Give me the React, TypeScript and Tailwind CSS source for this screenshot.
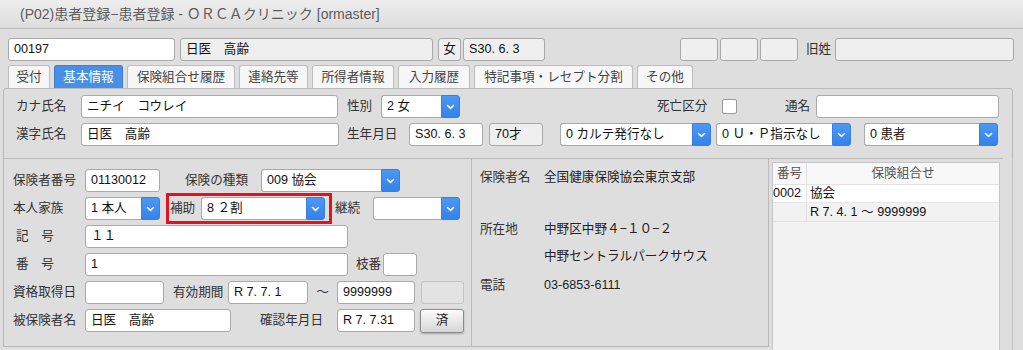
import React from "react";

const font = "font-['Liberation_Sans','Noto_Sans_CJK_JP',sans-serif]";

function Chevron() {
  return (
    <svg width="9" height="6" viewBox="0 0 9 6" fill="none">
      <path d="M1.5 1.5 L4.5 4.3 L7.5 1.5" stroke="white" strokeWidth="1.6" strokeLinecap="round" strokeLinejoin="round" />
    </svg>
  );
}

function Box({ w, ro, center, children, className = "" }: { w: string; ro?: boolean; center?: boolean; children?: React.ReactNode; className?: string }) {
  return (
    <div
      className={`h-[23px] ${w} shrink-0 border border-[#a9a9a9] rounded-[3px] ${ro ? "bg-[#efefef]" : "bg-white"} flex items-center ${center ? "justify-center" : "px-[5px]"} text-[#111] whitespace-nowrap overflow-hidden ${className}`}
    >
      {children}
    </div>
  );
}

function Select({ w, value, className = "" }: { w: string; value?: string; className?: string }) {
  return (
    <div className={`h-[23px] ${w} shrink-0 flex ${className}`}>
      <div className="flex-1 bg-white border border-r-0 border-[#a9a9a9] rounded-l-[3px] px-[5px] flex items-center text-[#111] whitespace-nowrap overflow-hidden">
        {value}
      </div>
      <div className="w-[19px] bg-gradient-to-b from-[#4b98f5] to-[#3482ea] border border-[#3a7fd8] rounded-r-[3px] flex items-center justify-center">
        <Chevron />
      </div>
    </div>
  );
}

function Label({ w, children, className = "" }: { w: string; children: React.ReactNode; className?: string }) {
  return <div className={`${w} shrink-0 text-[#333] whitespace-nowrap ${className}`}>{children}</div>;
}

const tabs = [
  { t: "受付", w: "w-[42px]" },
  { t: "基本情報", w: "w-[69px]", active: true },
  { t: "保険組合せ履歴", w: "w-[108px]" },
  { t: "連絡先等", w: "w-[69px]" },
  { t: "所得者情報", w: "w-[82px]" },
  { t: "入力履歴", w: "w-[72px]" },
  { t: "特記事項・レセプト分割", w: "w-[159px]" },
  { t: "その他", w: "w-[56px]" },
];

export default function App() {
  return (
    <div className={`w-[1023px] h-[350px] overflow-hidden bg-[#dedede] text-[12.6px] ${font}`}>
      {/* Title bar */}
      <div className="h-[29px] bg-gradient-to-b from-[#eeeeee] to-[#dddddd] border-b border-[#bdbdbd] flex items-center pl-[20px] text-[14px] text-[#5c5c5c]">
        (P02)患者登録−患者登録 - ＯＲＣＡクリニック [ormaster]
      </div>

      {/* Patient header */}
      <div className="flex items-center h-[22px] mt-[9px] pl-[8px]">
        <Box w="w-[167px] h-[22px]">00197</Box>
        <Box w="w-[253px] h-[22px]" ro className="ml-[5px]">日医　高齢</Box>
        <Box w="w-[23px] h-[22px]" ro center className="ml-[5px]">女</Box>
        <Box w="w-[82px] h-[22px]" ro className="ml-[2px]">S30. 6. 3</Box>
        <Box w="w-[38px] h-[22px]" ro className="ml-[135px]" />
        <Box w="w-[38px] h-[22px]" ro className="ml-[2px]" />
        <Box w="w-[38px] h-[22px]" ro className="ml-[2px]" />
        <Label w="w-[29px]" className="ml-[8px]">旧姓</Label>
        <Box w="w-[179px] h-[22px]" ro />
      </div>

      {/* Tabs */}
      <div className="flex gap-[4px] pl-[8px] mt-[5px] h-[23px]">
        {tabs.map((tab) => (
          <div
            key={tab.t}
            className={`${tab.w} h-[23px] rounded-t-[3px] border border-b-0 flex items-center justify-center whitespace-nowrap ${
              tab.active ? "bg-[#4a8fe7] border-[#3f7fd6] text-white" : "bg-[#f7f7f7] border-[#bdbdbd] text-[#444]"
            }`}
          >
            {tab.t}
          </div>
        ))}
      </div>

      {/* Panel 1 */}
      <div className="ml-[3px] w-[1010px] h-[70px] border border-b-0 border-[#b9b9b9] rounded-t-[3px] pt-[6px]">
        <div className="flex items-center h-[23px] pl-[12px]">
          <Label w="w-[65px]">カナ氏名</Label>
          <Box w="w-[257px]">ニチイ　コウレイ</Box>
          <Label w="w-[34px]" className="ml-[9px]">性別</Label>
          <Select w="w-[79px]" value="2 女" />
          <Label w="w-[50px]" className="ml-[197px]">死亡区分</Label>
          <div className="w-[15px] h-[15px] ml-[15px] bg-white border border-[#9a9a9a] rounded-[2px] shrink-0" />
          <Label w="w-[31px]" className="ml-[48px]">通名</Label>
          <Box w="w-[183px]" />
        </div>
        <div className="flex items-center h-[23px] pl-[12px] mt-[5px]">
          <Label w="w-[65px]">漢字氏名</Label>
          <Box w="w-[258px]">日医　高齢</Box>
          <Label w="w-[62px]" className="ml-[8px]">生年月日</Label>
          <Box w="w-[74px]">S30. 6. 3</Box>
          <Box w="w-[54px]" ro className="ml-[6px]">70才</Box>
          <Select w="w-[151px]" value="0 カルテ発行なし" className="ml-[17px]" />
          <Select w="w-[135px]" value="0 Ｕ・Ｐ指示なし" className="ml-[5px]" />
          <Select w="w-[134px]" value="0 患者" className="ml-[13px]" />
        </div>
      </div>

      {/* Panel 2 */}
      <div className="flex ml-[3px] h-[200px]">
        {/* Insurance form */}
        <div className="w-[469px] h-[189px] shrink-0 border border-[#b9b9b9] pt-[10px] pl-[9px] flex flex-col gap-[5px]">
          <div className="flex items-center h-[23px]">
            <Label w="w-[72px]">保険者番号</Label>
            <Box w="w-[75px]">01130012</Box>
            <Label w="w-[76px]" className="ml-[25px]">保険の種類</Label>
            <Select w="w-[139px]" value="009 協会" />
          </div>
          <div className="flex items-center h-[23px]">
            <Label w="w-[72px]">本人家族</Label>
            <Select w="w-[75px]" value="1 本人" />
            <div className="ml-[10px] w-[158px] h-[23px] flex items-center outline-[3px] outline-solid outline-offset-[1px] outline-[#e3121c]">
              <Label w="w-[31px]">補助</Label>
              <Select w="w-[124px]" value="8 ２割" />
            </div>
            <Label w="w-[38px]" className="ml-[7px]">継続</Label>
            <Select w="w-[87px]" />
          </div>
          <div className="flex items-center h-[23px]">
            <Label w="w-[72px]" className="pl-[3px]">記　号</Label>
            <Box w="w-[263px]">１１</Box>
          </div>
          <div className="flex items-center h-[23px]">
            <Label w="w-[72px]" className="pl-[3px]">番　号</Label>
            <Box w="w-[263px]">1</Box>
            <Label w="w-[27px]" className="ml-[8px]">枝番</Label>
            <Box w="w-[34px]" />
          </div>
          <div className="flex items-center h-[23px]">
            <Label w="w-[72px]">資格取得日</Label>
            <Box w="w-[79px]" />
            <Label w="w-[55px]" className="ml-[9px]">有効期間</Label>
            <Box w="w-[80px]">R 7. 7. 1</Box>
            <div className="w-[29px] shrink-0 text-center text-[#333]">〜</div>
            <Box w="w-[78px]">9999999</Box>
            <div className="ml-[6px] w-[43px] h-[23px] shrink-0 rounded-[3px] border border-[#c4c4c4] bg-[#e3e3e3]" />
          </div>
          <div className="flex items-center h-[23px]">
            <Label w="w-[72px]">被保険者名</Label>
            <Box w="w-[146px]">日医　高齢</Box>
            <Label w="w-[77px]" className="ml-[29px]">確認年月日</Label>
            <Box w="w-[78px]">R 7. 7.31</Box>
            <div className="ml-[5px] w-[44px] h-[24px] shrink-0 rounded-[3px] border border-[#8c8c8c] bg-gradient-to-b from-[#fbfbfb] to-[#d6d6d6] shadow-[0_1px_2px_rgba(0,0,0,0.25)] flex items-center justify-center text-[#222]">
              済
            </div>
          </div>
        </div>

        {/* Insurer info */}
        <div className="w-[297px] h-[189px] shrink-0 border border-l-0 border-[#b9b9b9] pl-[8px] pt-[9px] text-[#222]">
          <div className="flex h-[18px] items-center">
            <Label w="w-[64px]">保険者名</Label>
            <div>全国健康保険協会東京支部</div>
          </div>
          <div className="flex h-[18px] items-center mt-[34px]">
            <Label w="w-[64px]">所在地</Label>
            <div>中野区中野４−１０−２</div>
          </div>
          <div className="flex h-[18px] items-center mt-[9px]">
            <div className="w-[64px] shrink-0" />
            <div>中野セントラルパークサウス</div>
          </div>
          <div className="flex h-[18px] items-center mt-[11px]">
            <Label w="w-[64px]">電話</Label>
            <div>03-6853-6111</div>
          </div>
        </div>

        {/* Combination list */}
        <div className="w-[234px] shrink-0 border-t border-[#b9b9b9] pl-[3px] pt-[3px]">
          <div className="w-[228px] h-[200px] border border-[#c6c6c6] bg-[#f2f2f2]">
            <div className="flex h-[22px] bg-[#f8f8f8] border-b border-[#e2e2e2] text-[#555]">
              <div className="w-[34px] border-r border-[#e2e2e2] flex items-center justify-center">番号</div>
              <div className="flex-1 flex items-center justify-center">保険組合せ</div>
            </div>
            <div className="flex h-[18px] bg-white border-b border-[#e6e6e6] text-[#111]">
              <div className="w-[34px] border-r border-[#e6e6e6] flex items-center">0002</div>
              <div className="flex-1 flex items-center pl-[3px]">協会</div>
            </div>
            <div className="flex h-[19px] border-b border-[#e2e2e2] text-[#111]">
              <div className="w-[34px] border-r border-[#e2e2e2]" />
              <div className="flex-1 flex items-center pl-[3px]">R 7. 4. 1 〜 9999999</div>
            </div>
          </div>
        </div>
        <div className="w-[9px] shrink-0" />
        <div className="w-px h-[200px] shrink-0 bg-[#c2c2c2]" />
      </div>
    </div>
  );
}
